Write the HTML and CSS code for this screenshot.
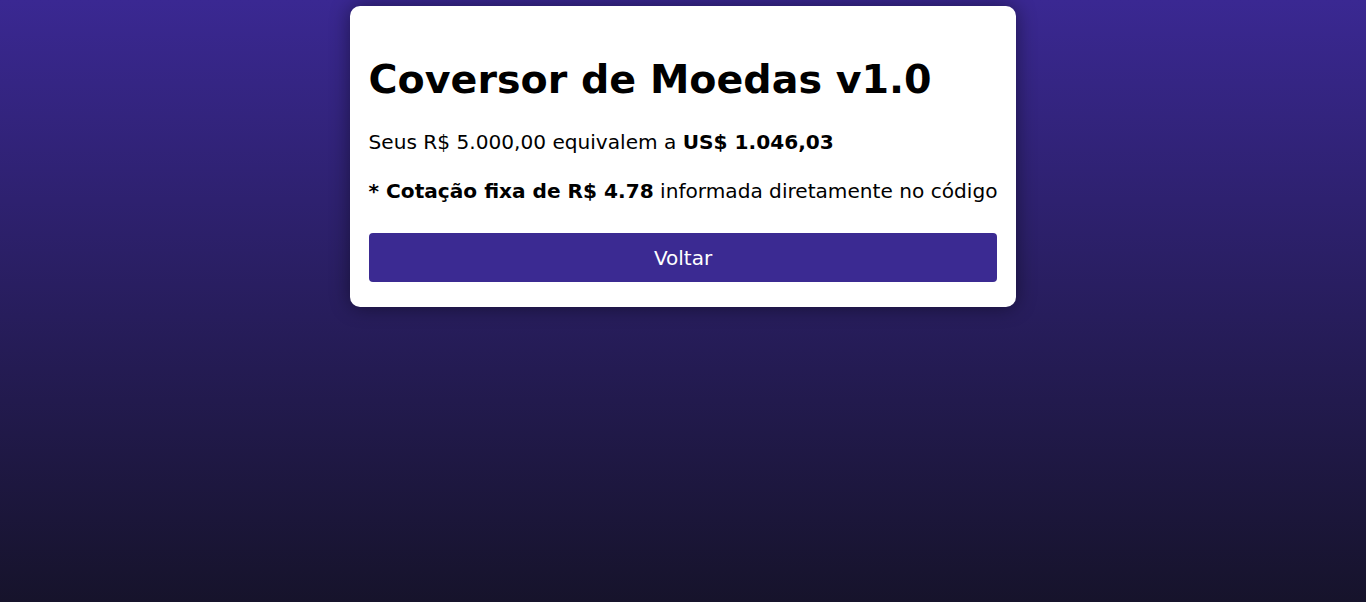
FILE: index.html
```html
<!DOCTYPE html>
<html lang="pt-BR">
<head>
<meta charset="utf-8">
<title>Coversor de Moedas v1.0</title>
<link rel="stylesheet" href="styles.css">
</head>
<body>
<main class="card">
  <h1 class="title">Coversor de Moedas v1.0</h1>
  <p class="result">Seus R$ 5.000,00 equivalem a <strong>US$ 1.046,03</strong></p>
  <p class="note"><strong>* Cotação fixa de R$ 4.78</strong> informada diretamente no código</p>
  <button class="back" type="button">Voltar</button>
</main>
</body>
</html>
```
FILE: styles.css
```css
html, body {
  margin: 0;
  padding: 0;
  height: 100%;
}
body {
  background: linear-gradient(to bottom, #3a2892 0%, #16132b 100%);
  font-family: "DejaVu Sans", Verdana, sans-serif;
  color: #000;
  display: flex;
  flex-direction: column;
  align-items: center;
}
.card {
  margin-top: 6px;
  background: #fff;
  border-radius: 10px;
  padding: 20px 19px 25px;
  box-shadow: 0 0 20px rgba(0, 0, 0, 0.45);
  display: flex;
  flex-direction: column;
  width: fit-content;
}
.title {
  margin: 30px 0 0;
  font-size: 39.6px;
  font-weight: bold;
  line-height: 46px;
}
.result, .note {
  font-size: 20.12px;
  line-height: 24px;
  margin: 0;
}
.result {
  margin-top: 28px;
}
.note {
  margin-top: 25px;
  white-space: nowrap;
}
.back {
  margin-top: 30px;
  height: 49px;
  border: none;
  border-radius: 4px;
  background: #3b2a92;
  color: #fff;
  font-family: "DejaVu Sans", Verdana, sans-serif;
  font-size: 20px;
  cursor: pointer;
}
```
